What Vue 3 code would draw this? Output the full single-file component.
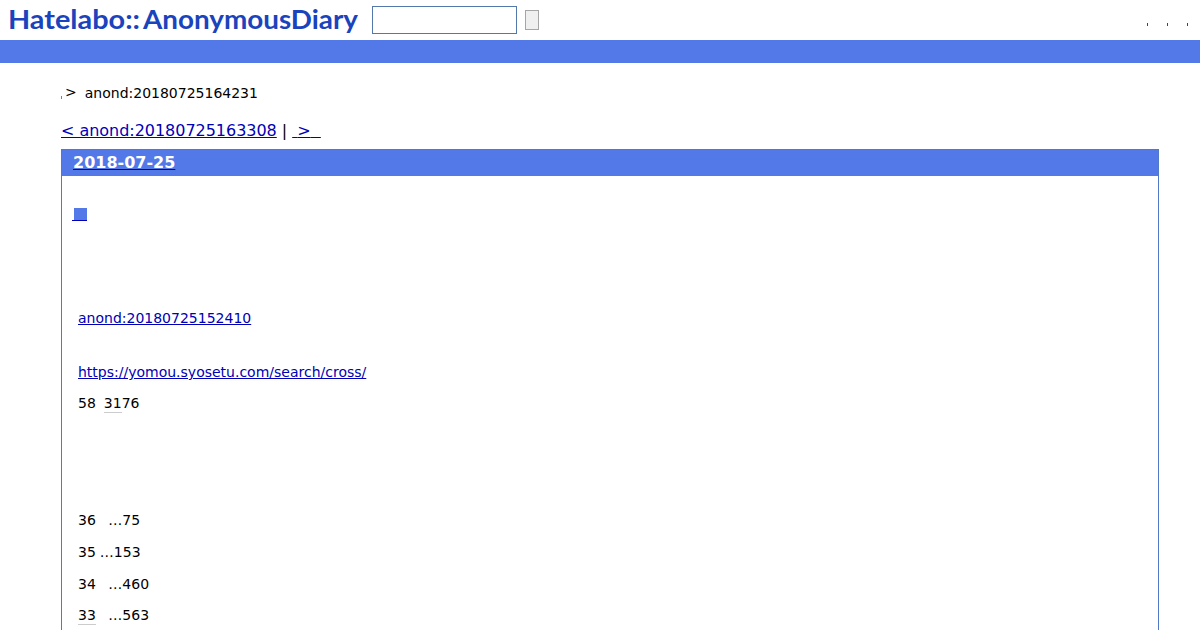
<template>
  <div class="page">
    <header class="site-header">
      <a class="logo" href="#">
        <svg width="352" height="36" viewBox="0 0 352 36">
          <text x="0" y="26.5" textLength="132" lengthAdjust="spacingAndGlyphs">Hatelabo::</text>
          <text x="135" y="26.5" textLength="215" lengthAdjust="spacingAndGlyphs">AnonymousDiary</text>
        </svg>
      </a>
      <form class="search" @submit.prevent>
        <input v-model="query" class="search-word" type="text">
        <button class="search-button" type="submit"></button>
      </form>
      <nav class="menu">
        <a v-for="n in 3" :key="n" href="#"></a>
      </nav>
    </header>
    <div class="bar"></div>

    <main class="content">
      <div class="breadcrumb">
        <a class="home" href="#"></a>
        <span class="arrow">&gt;</span>
        <span>anond:20180725164231</span>
      </div>

      <div class="pager">
        <a href="#">&lt; anond:20180725163308</a>
        <span class="divider">|</span>
        <a class="next" href="#">&gt;</a>
      </div>

      <article class="day">
        <h2><a href="#">2018-07-25</a></h2>
        <div class="body">
          <h3><a href="#"><span class="sanchor"></span></a></h3>
          <p class="reference"><a href="#">anond:20180725152410</a></p>
          <p class="source"><a href="https://yomou.syosetu.com/search/cross/">https://yomou.syosetu.com/search/cross/</a></p>
          <p class="total"><span class="first">58</span><span class="keyword">31</span>76</p>
          <p v-for="row in rows" :key="row.rank" class="row">
            <span :class="{ keyword: row.keyword }">{{ row.rank }}</span>
            <span :class="row.wide ? 'count wide' : 'count'">…{{ row.count }}</span>
          </p>
        </div>
      </article>
    </main>
  </div>
</template>

<script setup>
import { ref } from 'vue'

const query = ref('')

const rows = [
  { rank: 36, count: 75, wide: true },
  { rank: 35, count: 153 },
  { rank: 34, count: 460, wide: true },
  { rank: 33, count: 563, wide: true, keyword: true },
]
</script>

<style>
body {
  margin: 0;
  background: #fff;
  overflow: hidden;
}
</style>

<style scoped>
.page {
  height: 630px;
  overflow: hidden;
  font-family: "DejaVu Sans", sans-serif;
  font-size: 14px;
  line-height: 20px;
  color: #000;
}

a {
  color: #0000b4;
}

.site-header {
  display: flex;
  align-items: flex-start;
  height: 40px;
  padding: 0 11px 0 8px;
  box-sizing: border-box;
}

.logo {
  height: 36px;
  padding-top: 2px;
}

.logo svg {
  display: block;
}

.logo text {
  font-family: Lato, sans-serif;
  font-size: 26.5px;
  font-weight: 700;
  fill: #1a43bd;
}

.search {
  display: flex;
  align-items: center;
  gap: 8px;
  margin: 6px 0 0 12px;
}

.search-word {
  width: 145px;
  height: 28px;
  box-sizing: border-box;
  padding: 2px;
  border: 1px solid #5279a9;
  outline: none;
}

.search-button {
  width: 14px;
  height: 20px;
  padding: 0;
  border: 1px solid #a5a5a5;
  background: #efefef;
}

.menu {
  display: flex;
  gap: 19px;
  margin: 23px 1px 0 auto;
}

.menu a {
  width: 1px;
  height: 3px;
  background: #444;
}

.bar {
  height: 23px;
  background: #5279e7;
}

.content {
  padding: 20px 41px 0 61px;
}

.breadcrumb {
  display: flex;
}

.home {
  width: 1px;
  height: 3px;
  margin-top: 13px;
  background: #7777cc;
}

.arrow {
  margin: -1px 8px 0 3px;
}

.pager {
  display: flex;
  margin-top: 17px;
  font-size: 16px;
  line-height: 22px;
}

.pager > a:first-child {
  letter-spacing: -0.03px;
}

.divider {
  margin: 0 5px;
}

.next {
  white-space: pre;
}

.next::before {
  content: " ";
}

.next::after {
  content: "\a0\a0";
}

.day {
  height: 500px;
  margin-top: 7px;
  border: 1px solid #5279c7;
  box-sizing: border-box;
}

.day h2 {
  height: 26px;
  margin: 0;
  padding-left: 11px;
  background: #5279e7;
  font-size: 16px;
  line-height: 25px;
}

.day h2 a {
  color: #fff;
  text-decoration-color: #0000b4;
}

.body {
  padding: 32px 16px 0;
}

.body p {
  margin: 0;
}

.body h3 {
  height: 13px;
  margin: 0 0 0 -6px;
}

.body h3 a {
  display: block;
  width: 15px;
  border-bottom: 1px solid #0000b4;
  text-decoration: none;
}

.sanchor {
  display: block;
  width: 13px;
  height: 12px;
  margin-left: 2px;
  background: #5279e7;
}

.body .reference {
  margin-top: 87px;
}

.body .source {
  margin-top: 34px;
}

.body .total {
  margin: 11px 0 97px;
}

.first {
  margin-right: 8px;
}

.keyword {
  display: inline-block;
  height: 19px;
  border-bottom: 1px solid #ccc;
}

.body .row {
  display: flex;
  margin-bottom: 11.8px;
}

.count {
  margin-left: 4px;
}

.count.wide {
  margin-left: 12.5px;
}
</style>
